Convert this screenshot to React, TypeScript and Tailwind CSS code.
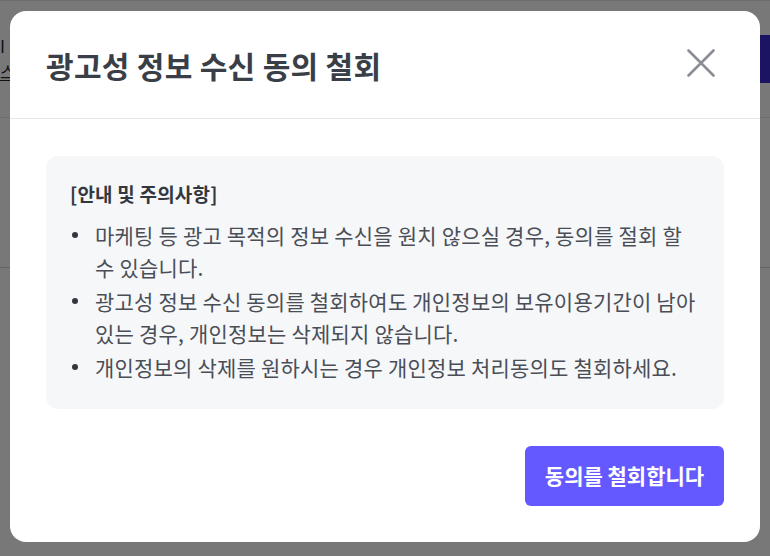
const notices = [
  "마케팅 등 광고 목적의 정보 수신을 원치 않으실 경우, 동의를 절회 할 수 있습니다.",
  "광고성 정보 수신 동의를 철회하여도 개인정보의 보유이용기간이 남아 있는 경우, 개인정보는 삭제되지 않습니다.",
  "개인정보의 삭제를 원하시는 경우 개인정보 처리동의도 철회하세요.",
];

export default function App() {
  return (
    <div
      className="relative h-[556px] w-[770px] overflow-hidden bg-white"
      style={{ fontFamily: '"Noto Sans CJK KR", "Noto Sans", sans-serif' }}
    >
      {/* page behind the overlay */}
      <div className="flex h-[118px] items-center justify-between border-t border-b border-gray-200">
        <div className="flex flex-col gap-1 text-[17px] text-gray-800">
          <span className="leading-[22px]">I</span>
          <span className="leading-[22px] underline">스</span>
        </div>
        <div className="flex h-[48px] w-[40px] items-center rounded-l-md bg-[#3b2bd0] pl-2 text-[18px] font-bold text-white">
          인
        </div>
      </div>
      <div className="h-[150px] border-b border-gray-300" />

      {/* overlay */}
      <div className="absolute inset-0 flex justify-center bg-black/[0.53] pt-[11px]">
        <div className="flex h-fit w-[750px] flex-col rounded-2xl bg-white">
          <div className="flex h-[108px] items-center justify-between border-b border-[#e5e7eb] pl-9 pr-[45px]">
            <h2 className="text-[30px] font-bold leading-none tracking-[0.3px] text-[#3a3e47]">
              광고성 정보 수신 동의 철회
            </h2>
            <button className="mt-[-4px] text-[#8a8d94]">
              <svg width="28" height="28" viewBox="0 0 28 28" fill="none" stroke="currentColor" strokeWidth="2.6" strokeLinecap="round">
                <path d="M1.5 1.5L26.5 26.5M26.5 1.5L1.5 26.5" />
              </svg>
            </button>
          </div>
          <div className="flex flex-col px-9 pt-[37px] pb-9">
            <div className="rounded-xl bg-[#f6f7f9] px-6 pt-6 pb-[26px]">
              <p className="text-[19px] font-bold leading-[28px] tracking-[0.2px] text-[#333740]">
                [안내 및 주의사항]
              </p>
              <ul className="mt-[11px] flex flex-col gap-[2px]">
                {notices.map((t) => (
                  <li key={t} className="flex text-[21px] leading-[32px] tracking-[0.2px] text-[#4a4e57]">
                    <span className="flex h-[32px] w-[25px] shrink-0 items-center pl-[2px]">
                      <span className="h-[6px] w-[6px] rounded-full bg-[#33363d]" />
                    </span>
                    <span className="break-keep">{t}</span>
                  </li>
                ))}
              </ul>
            </div>
            <div className="mt-[37px] flex justify-end">
              <button className="h-[60px] w-[199px] rounded-md bg-[#6459ff] text-[21px] font-bold text-white">
                동의를 철회합니다
              </button>
            </div>
          </div>
        </div>
      </div>
    </div>
  );
}
